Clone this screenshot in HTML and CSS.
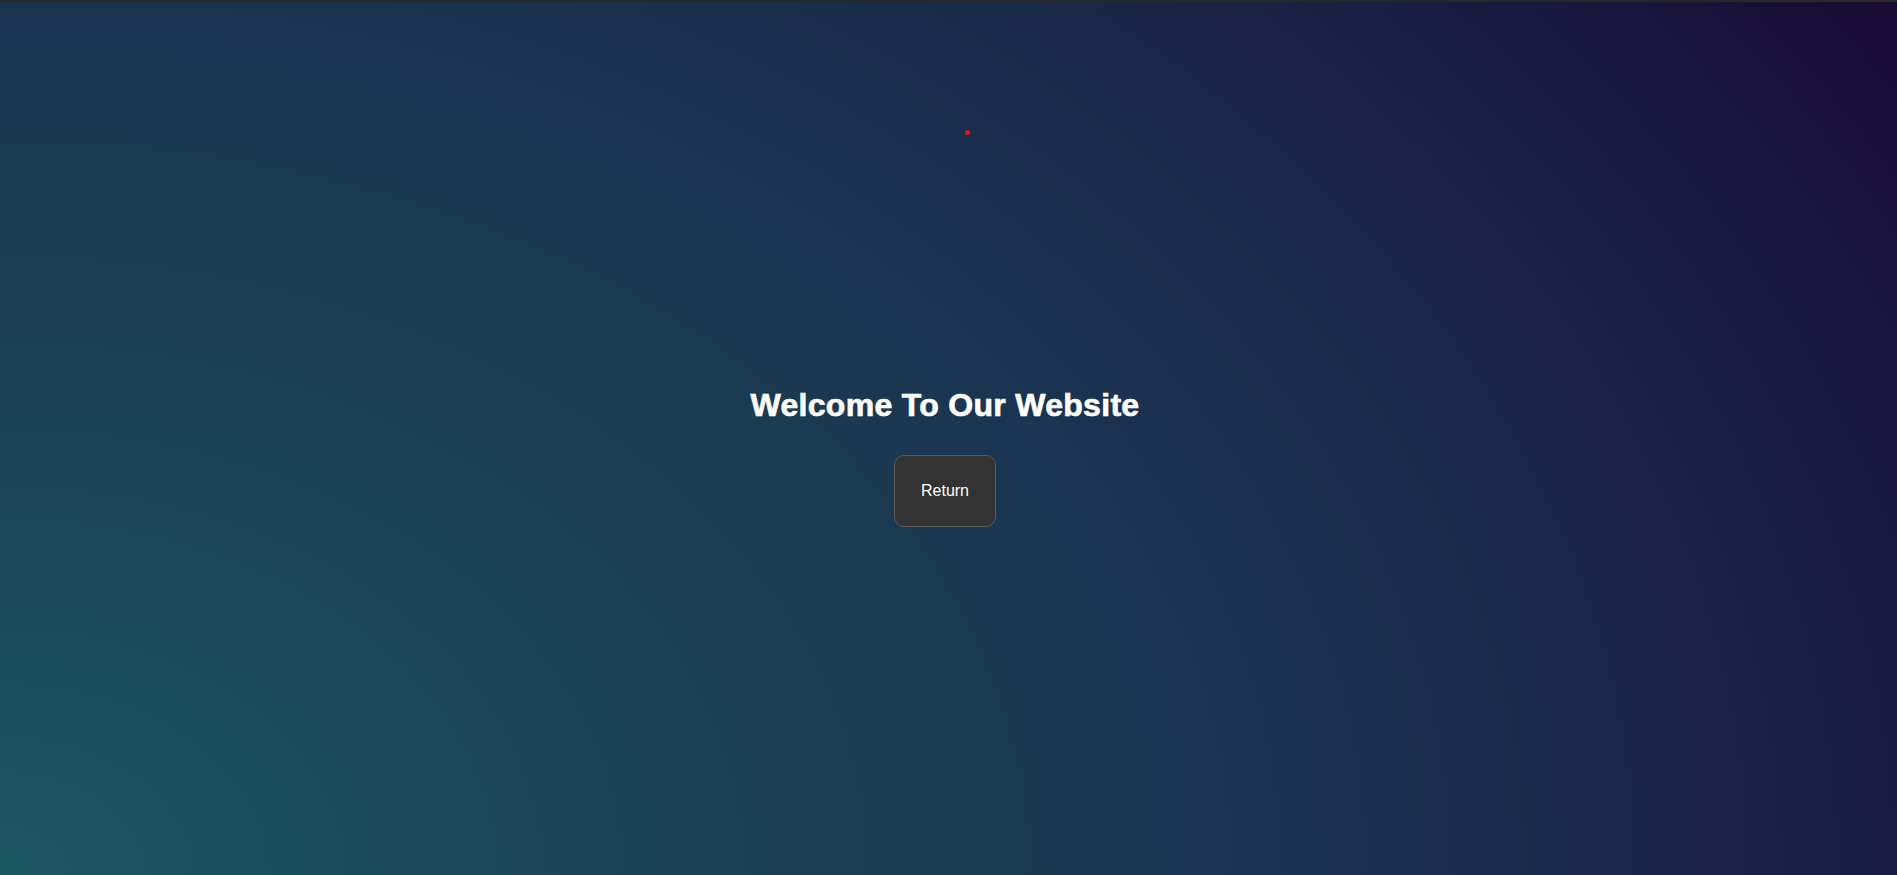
FILE: index.html
```html
<!DOCTYPE html>
<html lang="en">
<head>
<meta charset="utf-8">
<title>Welcome</title>
<link rel="stylesheet" href="styles.css">
</head>
<body>
<div class="dot"></div>
<main class="hero">
  <h1 class="title">Welcome To Our Website</h1>
  <button class="return-btn" type="button">Return</button>
</main>
</body>
</html>
```
FILE: styles.css
```css
html, body {
  margin: 0;
  padding: 0;
  height: 100%;
}
body {
  border-top: 2px solid #25292b;
  box-sizing: border-box;
  font-family: "Liberation Sans", Arial, sans-serif;
  background: radial-gradient(ellipse 2260px 1613px at 0% 100%,
    #1b5762 0%,
    #1a4357 27%,
    #1a3c52 42%,
    #1a3451 54%,
    #1a2a4a 69%,
    #1a1b42 84%,
    #190b36 100%);
  overflow: hidden;
  position: relative;
}
.hero {
  min-height: calc(100vh - 2px);
  box-sizing: border-box;
  padding-top: 37px;
  padding-right: 7px;
  display: flex;
  flex-direction: column;
  align-items: center;
  justify-content: center;
}
.title {
  margin: 0 0 31px;
  font-size: 32px;
  font-weight: bold;
  color: #ffffff;
  line-height: 37px;
  letter-spacing: 0.3px;
  -webkit-text-stroke: 0.7px #ffffff;
}
.return-btn {
  font-family: "Liberation Sans", Arial, sans-serif;
  font-size: 16px;
  line-height: 18px;
  color: #ffffff;
  background: #333333;
  border: 1px solid #5a5a5a;
  border-radius: 10px;
  padding: 26px 26px;
  cursor: pointer;
}
.dot {
  position: absolute;
  left: 965px;
  top: 128px;
  width: 5px;
  height: 5px;
  border-radius: 50%;
  background: #e8141c;
}
```
